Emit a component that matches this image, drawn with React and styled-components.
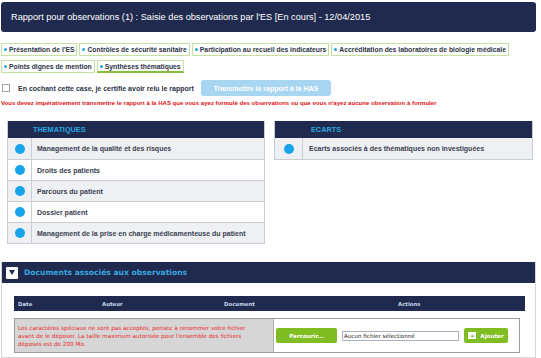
import React from "react";
import styled, { createGlobalStyle } from "styled-components";

const Global = createGlobalStyle`
  html, body { margin: 0; padding: 0; background: #fff; }
  body { font-family: "Liberation Sans", Arial, sans-serif; }
  * { box-sizing: border-box; }
`;

const Page = styled.div`
  width: 541px;
  height: 358px;
  overflow: hidden;
  padding: 2px 5px 0 1px;
  display: flex;
  flex-direction: column;
`;

const TitleBar = styled.div`
  height: 31px;
  background: #1f2a4e;
  border-radius: 3px;
  color: #fff;
  font-size: 9.2px;
  display: flex;
  align-items: center;
  padding-left: 10px;
`;

const Tabs = styled.div`
  display: flex;
  flex-wrap: wrap;
  gap: 2px 2px;
  margin-top: 11px;
  width: 535px;
`;

const TabBreak = styled.div`
  flex-basis: 100%;
  height: 0;
`;

const Tab = styled.div`
  height: 13px;
  border: 1px solid #c6e0a2;
  border-bottom: ${(p) => (p.$active ? "2px solid #86bd3c" : "1px solid #c6e0a2")};
  padding: 0 2px 0 2px;
  font-size: 6.8px;
  font-weight: bold;
  color: #2b3346;
  display: flex;
  align-items: center;
  gap: 2px;
  white-space: nowrap;
`;

const Dot = styled.span`
  width: 3px;
  height: 3px;
  border-radius: 50%;
  background: #1ea5e6;
  display: inline-block;
`;

const CertifyRow = styled.div`
  display: flex;
  align-items: center;
  margin-top: 7px;
  height: 16px;
`;

const Check = styled.span`
  width: 8px;
  height: 8px;
  border: 1px solid #9aa0a8;
  margin-left: 1px;
  background: #fff;
  display: inline-block;
`;

const CertifyText = styled.span`
  font-size: 7px;
  font-weight: bold;
  color: #2b3346;
  margin-left: 8px;
`;

const SendButton = styled.div`
  margin-left: 7px;
  height: 16px;
  width: 130px;
  border-radius: 3px;
  background: #a8d5f0;
  color: #fff;
  font-size: 7px;
  font-weight: bold;
  display: flex;
  align-items: center;
  justify-content: center;
`;

const Warning = styled.div`
  color: #e01010;
  font-size: 6.05px;
  font-weight: bold;
  margin-top: 4px;
  white-space: nowrap;
`;

const TablesRow = styled.div`
  display: flex;
  gap: 9px;
  padding-left: 6px;
  margin-top: 15px;
  align-items: flex-start;
`;

const Table = styled.div`
  width: ${(p) => p.$w}px;
  border: 1px solid #c9cdd4;
  border-top: none;
  display: flex;
  flex-direction: column;
`;

const TableHead = styled.div`
  height: 17px;
  background: #1f2a4e;
  color: #2ba8e0;
  font-size: 7.3px;
  font-weight: bold;
  display: flex;
  align-items: center;
  padding-left: ${(p) => p.$pad}px;
`;

const Row = styled.div`
  height: 21px;
  display: flex;
  background: ${(p) => (p.$alt ? "#fff" : "#eef0f3")};
  border-top: ${(p) => (p.$first ? "none" : "1px solid #c9cdd4")};
`;

const IconCell = styled.div`
  width: ${(p) => p.$w}px;
  border-right: 1px solid #c9cdd4;
  display: flex;
  align-items: center;
  justify-content: center;
`;

const Circle = styled.span`
  width: 10px;
  height: 10px;
  border-radius: 50%;
  background: #18a4ea;
`;

const LabelCell = styled.div`
  flex: 1;
  display: flex;
  align-items: center;
  padding-left: ${(p) => p.$pad}px;
  font-size: 7px;
  font-weight: bold;
  color: #3a4152;
`;

const Docs = styled.div`
  margin-top: 18px;
  border: 1px solid #d4d6da;
  border-top: none;
  display: flex;
  flex-direction: column;
  font-family: "DejaVu Sans", Verdana, sans-serif;
  height: 98px;
`;

const DocsHead = styled.div`
  height: 21px;
  background: #1f2a4e;
  display: flex;
  align-items: center;
  padding-left: 4px;
  gap: 6px;
`;

const Toggle = styled.span`
  width: 12px;
  height: 12px;
  background: #fff;
  border-radius: 1px;
  display: flex;
  align-items: center;
  justify-content: center;
`;

const DocsTitle = styled.span`
  color: #3aa7de;
  font-size: 7.6px;
  font-weight: bold;
`;

const DocsBody = styled.div`
  padding: 13px 10px 0 12px;
  display: flex;
  flex-direction: column;
  gap: 7px;
`;

const DocTableHead = styled.div`
  height: 15px;
  background: #1f2a4e;
  display: grid;
  grid-template-columns: 84px 122px 174px 1fr;
  align-items: center;
  padding-left: 4px;
  color: #c5d6ea;
  font-size: 5.4px;
  font-weight: bold;
`;

const HeadCell = styled.span``;

const UploadRow = styled.div`
  display: flex;
  border: 1px solid #9c9c9c;
  height: 35px;
  width: 506px;
`;

const Notice = styled.div`
  width: 259px;
  background: #d6d6d6;
  border-right: 1px solid #b0b0b0;
  color: #e8262a;
  font-size: 5.7px;
  line-height: 8px;
  padding: 5px 12px 0 3px;
`;

const Actions = styled.div`
  flex: 1;
  display: flex;
  align-items: center;
  padding-left: 2px;
  gap: 5px;
`;

const GreenButton = styled.div`
  height: 15px;
  width: ${(p) => p.$w}px;
  background: #7fbd22;
  border-radius: 2px;
  color: #fff;
  font-size: 5.6px;
  font-weight: bold;
  display: flex;
  align-items: center;
  justify-content: center;
  gap: 4px;
`;

const FileInput = styled.div`
  width: 117px;
  height: 10px;
  border: 1px solid #a9b3c0;
  background: #fff;
  font-size: 5.6px;
  color: #222;
  display: flex;
  align-items: center;
  padding-left: 1px;
`;

const PlusBox = styled.span`
  width: 8px;
  height: 7px;
  background: #fff;
  color: #7fbd22;
  font-size: 6px;
  line-height: 7px;
  text-align: center;
`;

const tabs1 = [
  "Présentation de l'ES",
  "Contrôles de sécurité sanitaire",
  "Participation au recueil des indicateurs",
  "Accréditation des laboratoires de biologie médicale",
];
const tabs2 = ["Points dignes de mention", "Synthèses thématiques"];

const themes = [
  "Management de la qualité et des risques",
  "Droits des patients",
  "Parcours du patient",
  "Dossier patient",
  "Management de la prise en charge médicamenteuse du patient",
];

export default function App() {
  return (
    <>
      <Global />
      <Page>
        <TitleBar>
          Rapport pour observations (1) : Saisie des observations par l'ES [En cours] - 12/04/2015
        </TitleBar>
        <Tabs>
          {tabs1.map((t) => (
            <Tab key={t}>
              <Dot />
              {t}
            </Tab>
          ))}
          <TabBreak />
          {tabs2.map((t, i) => (
            <Tab key={t} $active={i === 1}>
              <Dot />
              {t}
            </Tab>
          ))}
        </Tabs>
        <CertifyRow>
          <Check />
          <CertifyText>En cochant cette case, je certifie avoir relu le rapport</CertifyText>
          <SendButton>Transmettre le rapport à la HAS</SendButton>
        </CertifyRow>
        <Warning>
          Vous devez impérativement transmettre le rapport à la HAS que vous ayez formulé des observations ou que vous n'ayez aucune observation à formuler
        </Warning>
        <TablesRow>
          <Table $w={258}>
            <TableHead $pad={25}>THEMATIQUES</TableHead>
            {themes.map((t, i) => (
              <Row key={t} $alt={i % 2 === 1} $first={i === 0}>
                <IconCell $w={24}>
                  <Circle />
                </IconCell>
                <LabelCell $pad={5}>{t}</LabelCell>
              </Row>
            ))}
          </Table>
          <Table $w={259}>
            <TableHead $pad={36}>ECARTS</TableHead>
            <Row $first>
              <IconCell $w={28}>
                <Circle />
              </IconCell>
              <LabelCell $pad={6}>Ecarts associés à des thématiques non investiguées</LabelCell>
            </Row>
          </Table>
        </TablesRow>
        <Docs>
          <DocsHead>
            <Toggle>
              <svg width="6" height="5" viewBox="0 0 6 5">
                <path d="M0 0 L6 0 L3 5 Z" fill="#1f2a4e" />
              </svg>
            </Toggle>
            <DocsTitle>Documents associés aux observations</DocsTitle>
          </DocsHead>
          <DocsBody>
            <DocTableHead>
              <HeadCell>Date</HeadCell>
              <HeadCell>Auteur</HeadCell>
              <HeadCell>Document</HeadCell>
              <HeadCell>Actions</HeadCell>
            </DocTableHead>
            <UploadRow>
              <Notice>
                Les caractères spéciaux ne sont pas acceptés, pensez à renommer votre fichier
                avant de le déposer. La taille maximum autorisée pour l'ensemble des fichiers
                déposés est de 200 Mo.
              </Notice>
              <Actions>
                <GreenButton $w={61}>Parcourir...</GreenButton>
                <FileInput>Aucun fichier sélectionné</FileInput>
                <GreenButton $w={44}>
                  <PlusBox>+</PlusBox>
                  Ajouter
                </GreenButton>
              </Actions>
            </UploadRow>
          </DocsBody>
        </Docs>
      </Page>
    </>
  );
}
